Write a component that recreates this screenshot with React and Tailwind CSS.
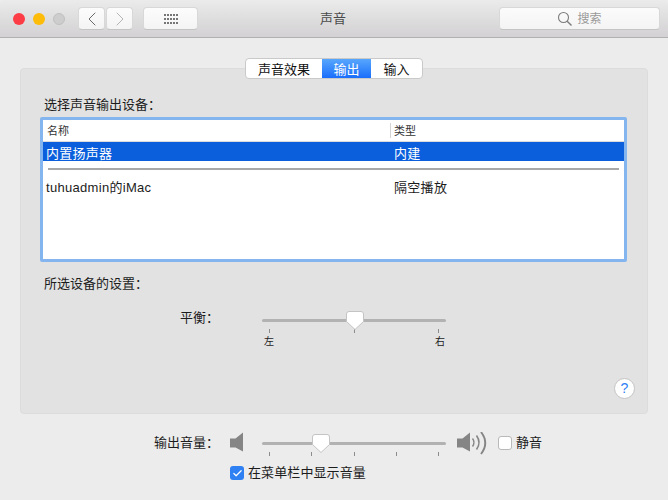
import { Check, ChevronLeft, ChevronRight } from "lucide-react";

const FONT = "font-['Liberation_Sans','Noto_Sans_CJK_SC',sans-serif]";

function GridDots() {
  const dots = [];
  for (let y = 0; y < 3; y++) {
    for (let x = 0; x < 5; x++) {
      dots.push(<rect key={`${x}-${y}`} x={x * 3} y={y * 4} width="2" height="2" fill="#767676" />);
    }
  }
  return (
    <svg width="14" height="10" viewBox="0 0 14 10">
      {dots}
    </svg>
  );
}

function SpeakerIcon({ waves }) {
  return (
    <svg width={waves ? 33 : 15} height="24" viewBox={waves ? "0 0 33 24" : "0 0 15 24"}>
      <path d="M0 6.5H5.5L13 .5V19.5L5.5 15.5H0Z" fill="#858585" />
      {waves && (
        <g fill="none" stroke="#858585">
          <path d="M15.5 6.5Q18.5 10.5 15.5 14.5" strokeWidth="1.4" />
          <path d="M19.5 3.5Q24.5 10.5 19.5 17.5" strokeWidth="1.6" />
          <path d="M24 0Q32.5 11 24 22" strokeWidth="1.9" />
        </g>
      )}
    </svg>
  );
}

// track + thumb, ticks sit below as their own row
function Slider({ thumbLeft, ticks }) {
  return (
    <div className="w-[184px] flex flex-col">
      <div className="relative h-[3px] rounded-full bg-[#b2b2b2]">
        <svg className="absolute top-[-8px]" style={{ left: thumbLeft }} width="18" height="20" viewBox="0 0 18 20">
          <path
            d="M3 .5H15A2.5 2.5 0 0 1 17.5 3V10.5L9 18.5L.5 10.5V3A2.5 2.5 0 0 1 3 .5Z"
            fill="#fff"
            stroke="#c4c4c4"
          />
        </svg>
      </div>
      <div className="mt-[7px] h-[4px] px-[7px] flex justify-between">
        {ticks.map((t) => (
          <div key={t} className="w-px h-[4px] bg-[#8c8c8c]" />
        ))}
      </div>
    </div>
  );
}

export default function App() {
  return (
    <div className={`${FONT} w-[668px] h-[500px] overflow-hidden bg-[#ececec] text-[13px] text-[#1c1c1c] flex flex-col`}>
      <div className="h-[38px] shrink-0 border-b border-[#b1b1b1] rounded-t-[5px] bg-gradient-to-b from-[#ebebeb] to-[#d3d1d3] flex items-center pl-[13px] pr-[8px]">
        <div className="flex gap-2">
          <div className="w-3 h-3 rounded-full bg-[#fc3d45]" />
          <div className="w-3 h-3 rounded-full bg-[#fdbc09]" />
          <div className="w-3 h-3 rounded-full bg-[#cdcdcd] border border-[#c0c0c0]" />
        </div>
        <div className="ml-[13px] flex gap-px">
          <div className="w-[27px] h-[23px] rounded-[4px] bg-gradient-to-b from-[#fcfcfc] to-[#f4f4f4] border border-[#d8d8d8] border-b-[#c4c4c4] flex items-center justify-center">
            <ChevronLeft size={24} strokeWidth={1} className="text-[#6a6a6a]" />
          </div>
          <div className="w-[27px] h-[23px] rounded-[4px] bg-gradient-to-b from-[#fcfcfc] to-[#f4f4f4] border border-[#d8d8d8] border-b-[#c4c4c4] flex items-center justify-center">
            <ChevronRight size={24} strokeWidth={1} className="text-[#b5b5b5]" />
          </div>
        </div>
        <div className="ml-[10px] w-[55px] h-[23px] rounded-[4px] bg-gradient-to-b from-[#fcfcfc] to-[#f4f4f4] border border-[#d8d8d8] border-b-[#c4c4c4] flex items-center justify-center">
          <GridDots />
        </div>
        <div className="w-[85px]" />
        <div className="w-[100px] text-center text-[13px] leading-[20px] text-[#4b4b4b]">声音</div>
        <div className="ml-auto w-[161px] h-[23px] rounded-[4px] bg-gradient-to-b from-[#fbfbfb] to-[#f4f4f4] border border-[#d8d8d8] border-b-[#c4c4c4] flex items-center justify-center gap-[4px] text-[#9a9a9a] text-[12px]">
          <svg width="16" height="16" viewBox="0 0 16 16" fill="none" stroke="#7c7c7c" strokeWidth="1.1">
            <circle cx="6.5" cy="6.5" r="5" />
            <path d="M10.2 10.2L14.5 14.5" strokeWidth="1.4" />
          </svg>
          <span>搜索</span>
        </div>
      </div>

      <div className="pt-[20px] px-[20px] flex flex-col">
        <div className="relative z-10 self-center flex h-[21px] mb-[-11px] rounded-[4px] bg-white border border-[#c9c9c9] overflow-hidden text-[13px] leading-[21px] text-[#111111]">
          <div className="w-[76px] text-center">声音效果</div>
          <div className="w-[49px] text-center text-white bg-gradient-to-b from-[#57a6fd] to-[#1a6dfb]">输出</div>
          <div className="w-[51px] text-center">输入</div>
        </div>

        <div className="h-[346px] w-[628px] rounded-[4px] bg-[#e2e2e2] border border-[#dcdcdc] px-[19px] pt-[27px] flex flex-col">
          <div className="ml-[4px] h-[17px] leading-[17px]">选择声音输出设备：</div>
          <div className="mt-[4px] w-[587px] h-[145px] rounded-[2px] border-[3px] border-[#85b5ee] bg-white flex flex-col">
            <div className="h-[22px] shrink-0 flex items-center border-b border-[#dcdcdc] text-[11px] text-[#333333]">
              <div className="w-[348px] pl-[4px] border-r border-[#d5d5d5] h-[15px] leading-[17px]">名称</div>
              <div className="pl-[3px] leading-[17px] pt-px">类型</div>
            </div>
            <div className="h-[19px] shrink-0 flex items-center pt-[3px] bg-[#0b5fdc] text-white text-[13px] tracking-[0.25px] leading-[17px]">
              <div className="w-[351px] pl-[3px]">内置扬声器</div>
              <div>内建</div>
            </div>
            <div className="mt-[7px] mx-[5px] h-[2px] bg-[#a8a8a8]" />
            <div className="mt-[7px] h-[20px] flex items-center pt-[1px] text-[13px] tracking-[0.3px] leading-[17px]">
              <div className="w-[351px] pl-[3px]">tuhuadmin的iMac</div>
              <div>隔空播放</div>
            </div>
          </div>

          <div className="mt-[13px] ml-[4px] h-[17px] leading-[17px]">所选设备的设置：</div>

          <div className="mt-[18px] flex">
            <div className="w-[222px] pl-[140px] h-[17px] leading-[17px] mt-[-1px]">平衡：</div>
            <div className="mt-[9px] flex flex-col">
              <Slider thumbLeft={84} ticks={["l", "m", "r"]} />
              <div className="mt-[2px] pl-[2px] pr-[1px] flex justify-between text-[10px] leading-[14px]">
                <span>左</span>
                <span>右</span>
              </div>
            </div>
          </div>

          <div className="mt-[29px] self-end mr-[-7px] w-[21px] h-[21px] rounded-full bg-white border border-[#c4c4c4] flex items-center justify-center text-[#2f80f6] text-[14px]">
            ?
          </div>
        </div>
      </div>

      <div className="mt-[18px] ml-[154px] flex items-start">
        <div className="w-[76px] h-[17px] leading-[17px] mt-[2px]">输出音量：</div>
        <SpeakerIcon />
        <div className="ml-[17px] mt-[10px]">
          <Slider thumbLeft={50} ticks={["a", "b", "c", "d", "e"]} />
        </div>
        <div className="ml-[11px]">
          <SpeakerIcon waves />
        </div>
        <div className="ml-[8px] mt-[4px] w-[14px] h-[14px] rounded-[3px] bg-white border border-[#b9b9b9]" />
        <div className="ml-[4px] h-[17px] leading-[17px] mt-[2px] text-[13px]">静音</div>
      </div>

      <div className="mt-[8px] ml-[230px] flex items-center gap-[4px] text-[13px] leading-[18px]">
        <div className="w-[14px] h-[14px] rounded-[3px] bg-[#2f80f2] flex items-center justify-center">
          <Check size={11} strokeWidth={2.6} className="text-white" />
        </div>
        <span className="tracking-[0.1px]">在菜单栏中显示音量</span>
      </div>
    </div>
  );
}
